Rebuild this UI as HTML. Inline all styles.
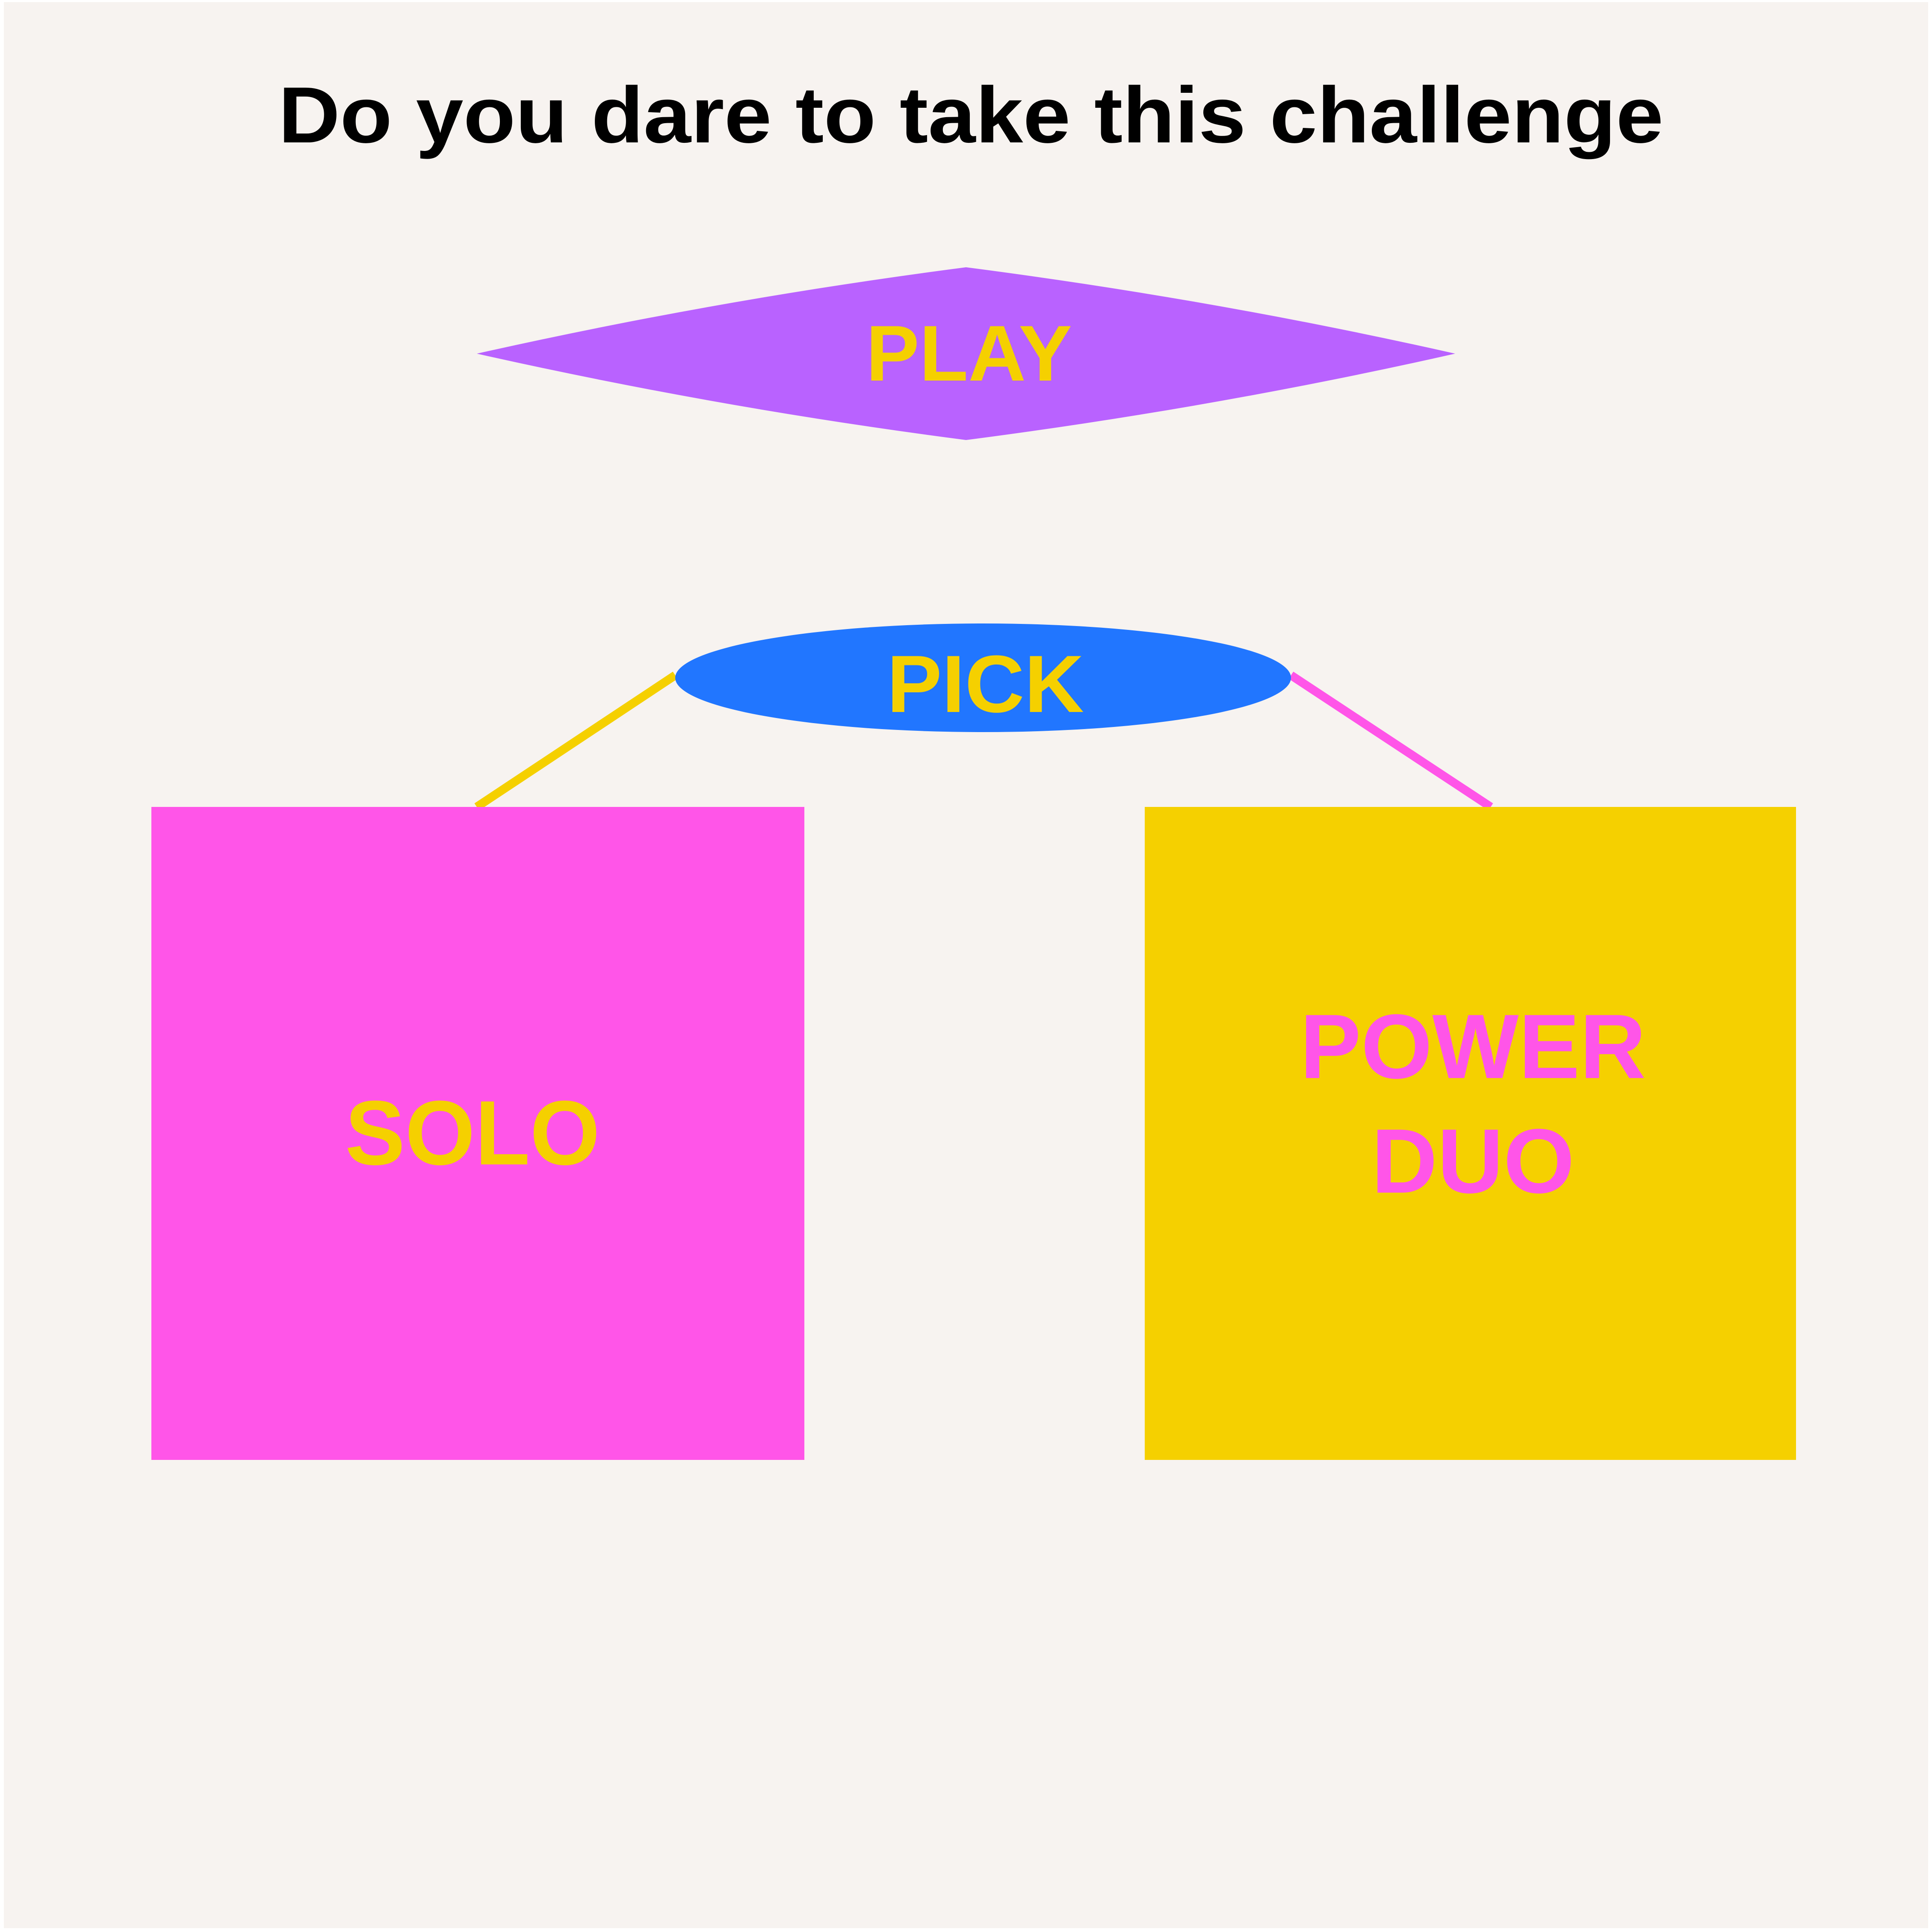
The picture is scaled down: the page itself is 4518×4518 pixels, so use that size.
<!DOCTYPE html>
<html><head><meta charset="utf-8"><style>
html,body{margin:0;padding:0;background:#fff;}
svg{display:block;}
text{font-family:"Liberation Sans",sans-serif;font-weight:bold;}
</style></head><body>
<svg width="4518" height="4518" viewBox="0 0 4518 4518" xmlns="http://www.w3.org/2000/svg">
<rect x="0" y="0" width="4518" height="4518" fill="#ffffff"/>
<rect x="9" y="5" width="4500" height="4504" fill="#f7f3f0"/>
<text x="651" y="333" font-size="186" fill="#000" textLength="3239" lengthAdjust="spacingAndGlyphs">Do you dare to take this challenge</text>
<path d="M1115,827 Q1680,700 2259,625 Q2840,700 3403,827 Q2840,954 2259,1029 Q1680,954 1115,827 Z" fill="#b962ff"/>
<text x="2025" y="890" font-size="185" fill="#f5d000" textLength="482" lengthAdjust="spacingAndGlyphs">PLAY</text>
<line x1="1115" y1="1887" x2="1579" y2="1579" stroke="#f5d000" stroke-width="20"/>
<line x1="3019" y1="1579" x2="3486" y2="1887" stroke="#ff55e8" stroke-width="20"/>
<ellipse cx="2299" cy="1585" rx="720" ry="127" fill="#2176ff"/>
<text x="2074" y="1665" font-size="190" fill="#f5d000" textLength="461" lengthAdjust="spacingAndGlyphs">PICK</text>
<rect x="354" y="1887" width="1527" height="1527" fill="#ff55e8"/>
<rect x="2677" y="1887" width="1523" height="1527" fill="#f5d000"/>
<text x="807" y="2723" font-size="214" fill="#f5d000" textLength="596" lengthAdjust="spacingAndGlyphs">SOLO</text>
<text x="3040" y="2521" font-size="214" fill="#ff55e8" textLength="809" lengthAdjust="spacingAndGlyphs">POWER</text>
<text x="3207" y="2789" font-size="214" fill="#ff55e8" textLength="475" lengthAdjust="spacingAndGlyphs">DUO</text>
</svg>
</body></html>
